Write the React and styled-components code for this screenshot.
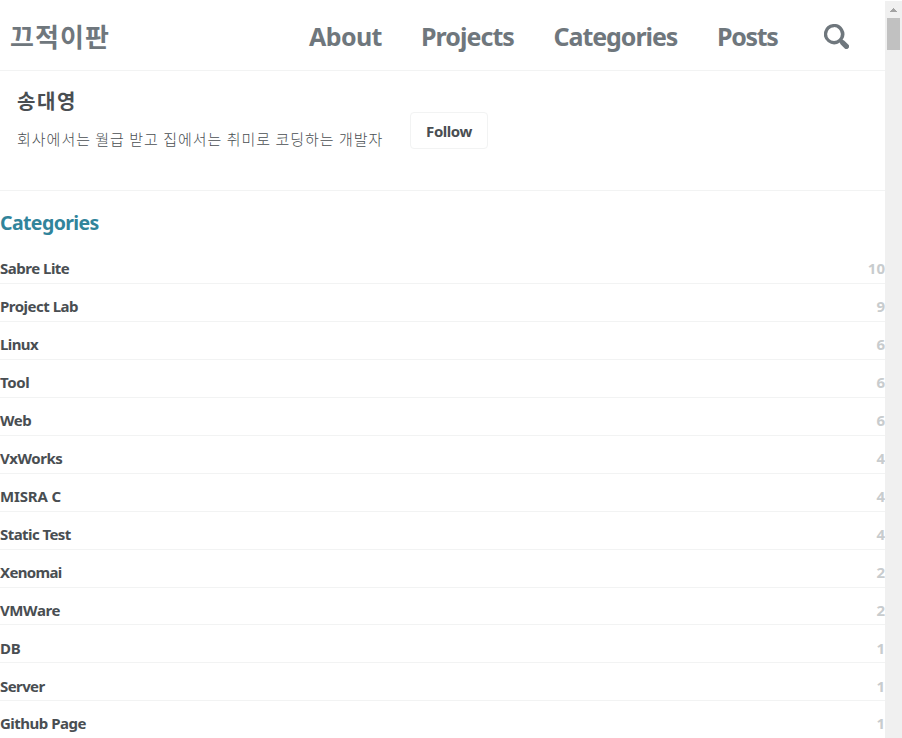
import React from 'react';
import styled, { createGlobalStyle } from 'styled-components';

const GlobalStyle = createGlobalStyle`
  * { box-sizing: border-box; }
  html, body { margin: 0; height: 100%; overflow: hidden; background: #fff; }
  body { font-family: "Noto Sans", "Noto Sans CJK KR", sans-serif; color: #494e52; }
  h1, h2, h3, p, ul { margin: 0; padding: 0; }
  a { color: inherit; text-decoration: none; }
`;

const Window = styled.div`
  display: flex;
  width: 902px;
  height: 738px;
  overflow: hidden;
`;

const Page = styled.div`
  flex: 0 0 885px;
  min-width: 0;
`;

const Masthead = styled.header`
  display: flex;
  align-items: center;
  height: 71px;
  padding: 0 36px 0 10px;
  border-bottom: 1px solid #f2f3f3;
  color: #6f777d;
`;

const SiteTitle = styled.a`
  flex: 1;
  margin-top: 1px;
  font-family: "Noto Sans CJK KR", sans-serif;
  font-size: 26px;
  font-weight: 700;
  line-height: 38px;
  letter-spacing: ${(p) => p.$spacing}px;
  white-space: nowrap;
`;

const Nav = styled.nav`
  display: flex;
  gap: 40px;
  margin-top: 1px;
`;

const NavLink = styled.a`
  width: ${(p) => p.$width}px;
  font-size: 25px;
  font-weight: 700;
  line-height: 36px;
  letter-spacing: ${(p) => p.$spacing}px;
  white-space: nowrap;
`;

const SearchButton = styled.button`
  display: flex;
  margin: 3px 0 0 46px;
  padding: 0;
  border: 0;
  background: none;
  color: inherit;
`;

const Author = styled.section`
  display: flex;
  align-items: flex-start;
  height: 120px;
  padding-left: 17px;
  border-bottom: 1px solid #f2f3f3;
`;

const Bio = styled.div`
  width: 393px;
  padding-top: 16px;
  font-family: "Noto Sans CJK KR", sans-serif;
`;

const AuthorName = styled.h3`
  font-size: 20px;
  font-weight: 700;
  line-height: 28px;
  letter-spacing: 1.6px;
`;

const AuthorBio = styled.p`
  margin-top: 12px;
  font-size: 15px;
  font-weight: 300;
  line-height: 24px;
  letter-spacing: 1px;
  white-space: nowrap;
`;

const FollowButton = styled.button`
  width: 78px;
  height: 37px;
  margin-top: 41px;
  padding: 2px 0 0;
  border: 1px solid #f2f3f3;
  border-radius: 4px;
  background: #fff;
  color: #494e52;
  font: 700 15px/33px "Noto Sans", sans-serif;
  letter-spacing: -0.45px;
`;

const SectionTitle = styled.h2`
  height: 55.25px;
  padding-top: 18px;
  color: #31849b;
  font-size: 19.5px;
  font-weight: 700;
  line-height: 28px;
  letter-spacing: -0.6px;
`;

const CategoryList = styled.ul`
  list-style: none;
`;

const Category = styled.li`
  display: flex;
  justify-content: space-between;
  height: 37.922px;
  padding-top: 11.145px;
  border-bottom: 1px solid #f2f3f3;
  font-size: 15px;
  font-weight: 700;
  line-height: 22px;
`;

const CategoryName = styled.a`
  letter-spacing: ${(p) => p.$spacing}px;
  white-space: nowrap;
`;

const Count = styled.span`
  color: #c8ccce;
`;

const ScrollTrack = styled.div`
  flex: 0 0 17px;
  height: 737px;
  margin-top: 1px;
  background: #f0f0f0;
`;

const ScrollArrow = styled.svg`
  display: block;
  width: 17px;
  height: 17px;
`;

const ScrollThumb = styled.div`
  width: 13px;
  height: 32px;
  margin-left: 2px;
  background: #c1c1c1;
`;

const links = [
  { label: 'About', width: 72, spacing: -0.6 },
  { label: 'Projects', width: 92.5, spacing: -0.95 },
  { label: 'Categories', width: 123.5, spacing: -1.05 },
  { label: 'Posts', width: 61, spacing: -1.3 },
];

const categories = [
  ['Sabre Lite', 10, -0.5],
  ['Project Lab', 9, -0.5],
  ['Linux', 6, -0.6],
  ['Tool', 6, -0.35],
  ['Web', 6, -0.45],
  ['VxWorks', 4, -0.45],
  ['MISRA C', 4, -0.15],
  ['Static Test', 4, -0.57],
  ['Xenomai', 2, -0.65],
  ['VMWare', 2, -0.4],
  ['DB', 1, -0.2],
  ['Server', 1, -0.6],
  ['Github Page', 1, -0.5],
];

const SearchIcon = () => (
  <svg width="25" height="25" viewBox="0 0 16 16" fill="currentColor" aria-hidden="true">
    <path d="M15.5,13.12L13.19,10.8a1.69,1.69,0,0,0-1.28-.55l-.06-.06A6.5,6.5,0,0,0,5.77,0,6.5,6.5,0,0,0,2.46,11.59a6.47,6.47,0,0,0,7.74.26l.05.05a1.65,1.65,0,0,0,.5,1.24l2.38,2.38A1.68,1.68,0,0,0,15.5,13.12ZM6.4,2A4.41,4.41,0,1,1,2,6.4,4.43,4.43,0,0,1,6.4,2Z" />
  </svg>
);

export default function App() {
  return (
    <>
      <GlobalStyle />
      <Window>
        <Page>
          <Masthead>
            <SiteTitle href="#" $spacing={1.1}>끄적이판</SiteTitle>
            <Nav>
              {links.map((l) => (
                <NavLink key={l.label} href="#" $width={l.width} $spacing={l.spacing}>{l.label}</NavLink>
              ))}
            </Nav>
            <SearchButton aria-label="Search"><SearchIcon /></SearchButton>
          </Masthead>
          <Author>
            <Bio>
              <AuthorName>송대영</AuthorName>
              <AuthorBio>회사에서는 월급 받고 집에서는 취미로 코딩하는 개발자</AuthorBio>
            </Bio>
            <FollowButton>Follow</FollowButton>
          </Author>
          <SectionTitle>Categories</SectionTitle>
          <CategoryList>
            {categories.map(([name, count, spacing]) => (
              <Category key={name}>
                <CategoryName href="#" $spacing={spacing}>{name}</CategoryName>
                <Count>{count}</Count>
              </Category>
            ))}
          </CategoryList>
        </Page>
        <ScrollTrack>
          <ScrollArrow viewBox="0 0 17 17" shapeRendering="crispEdges">
            <path d="M5 11h7v-1h-1V9h-1V8H9V7H8v1H7v1H6v1H5z" fill="#a3a3a3" />
          </ScrollArrow>
          <ScrollThumb />
        </ScrollTrack>
      </Window>
    </>
  );
}
